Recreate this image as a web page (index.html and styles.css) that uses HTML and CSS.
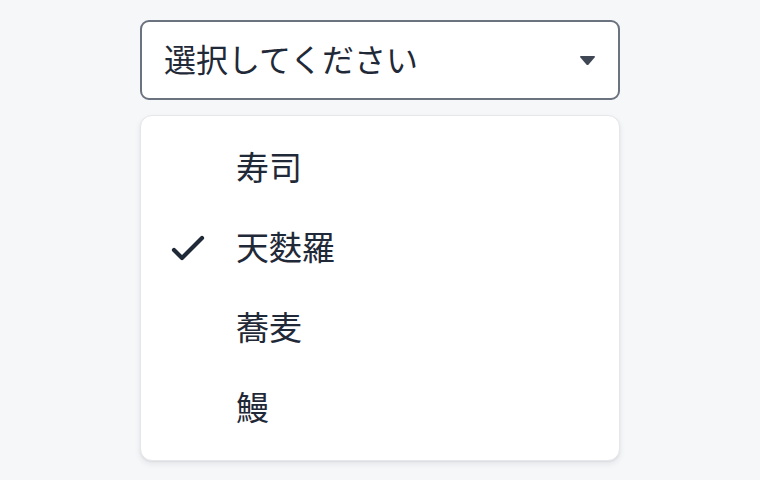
FILE: index.html
```html
<!DOCTYPE html>
<html lang="ja">
<head>
<meta charset="utf-8">
<title>選択</title>
<link rel="stylesheet" href="styles.css">
</head>
<body>
<div class="select">
  <button class="trigger" type="button">
    <span class="trigger-label">選択してください</span>
    <svg class="caret" width="17" height="11" viewBox="0 0 17 11" aria-hidden="true"><path d="M2 1 L15 1 Q16.8 1 15.6 2.6 L9.6 9.4 Q8.5 10.6 7.4 9.4 L1.4 2.6 Q0.2 1 2 1 Z" fill="#3f4754"/></svg>
  </button>
  <ul class="menu">
    <li class="option"><span class="check"></span><span class="option-label">寿司</span></li>
    <li class="option selected"><span class="check"><svg width="48" height="48" viewBox="0 0 24 24" fill="none" stroke="#1f2937" stroke-width="2.1" stroke-linecap="round" stroke-linejoin="round" aria-hidden="true"><path d="M5 13l4 4L19 7"/></svg></span><span class="option-label">天麩羅</span></li>
    <li class="option"><span class="check"></span><span class="option-label">蕎麦</span></li>
    <li class="option"><span class="check"></span><span class="option-label">鰻</span></li>
  </ul>
</div>
</body>
</html>
```
FILE: styles.css
```css
html, body {
  margin: 0;
  padding: 0;
}
body {
  background: #f6f7f9;
  font-family: "Noto Sans CJK JP", "Noto Sans", sans-serif;
  color: #1f2937;
  width: 760px;
  height: 480px;
  overflow: hidden;
}
.select {
  width: 480px;
  margin: 20px auto 0;
  display: flex;
  flex-direction: column;
  gap: 15px;
}
.trigger {
  box-sizing: border-box;
  height: 80px;
  width: 100%;
  display: flex;
  align-items: center;
  justify-content: space-between;
  padding: 0 22px 0 22px;
  background: #ffffff;
  border: 2px solid #6b7280;
  border-radius: 9px;
  font-family: inherit;
  color: #1f2937;
  cursor: pointer;
}
.trigger-label {
  font-size: 32px;
  line-height: 1;
  padding-bottom: 4px;
  color: #1f2937;
}
.caret {
  display: block;
}
.menu {
  list-style: none;
  margin: 0;
  padding: 12px 0;
  background: #ffffff;
  border: 1px solid #e5e7eb;
  border-radius: 12px;
  box-shadow: 0 3px 6px rgba(15, 23, 42, 0.08), 0 1px 2px rgba(15, 23, 42, 0.06);
}
.option {
  height: 80px;
  display: flex;
  align-items: center;
  padding-left: 23px;
}
.check {
  width: 48px;
  height: 48px;
  margin-right: 24px;
  display: flex;
  align-items: center;
  justify-content: center;
}
.check svg {
  display: block;
}
.option-label {
  font-size: 33px;
  line-height: 1;
  padding-bottom: 4px;
  color: #1f2937;
}
```
